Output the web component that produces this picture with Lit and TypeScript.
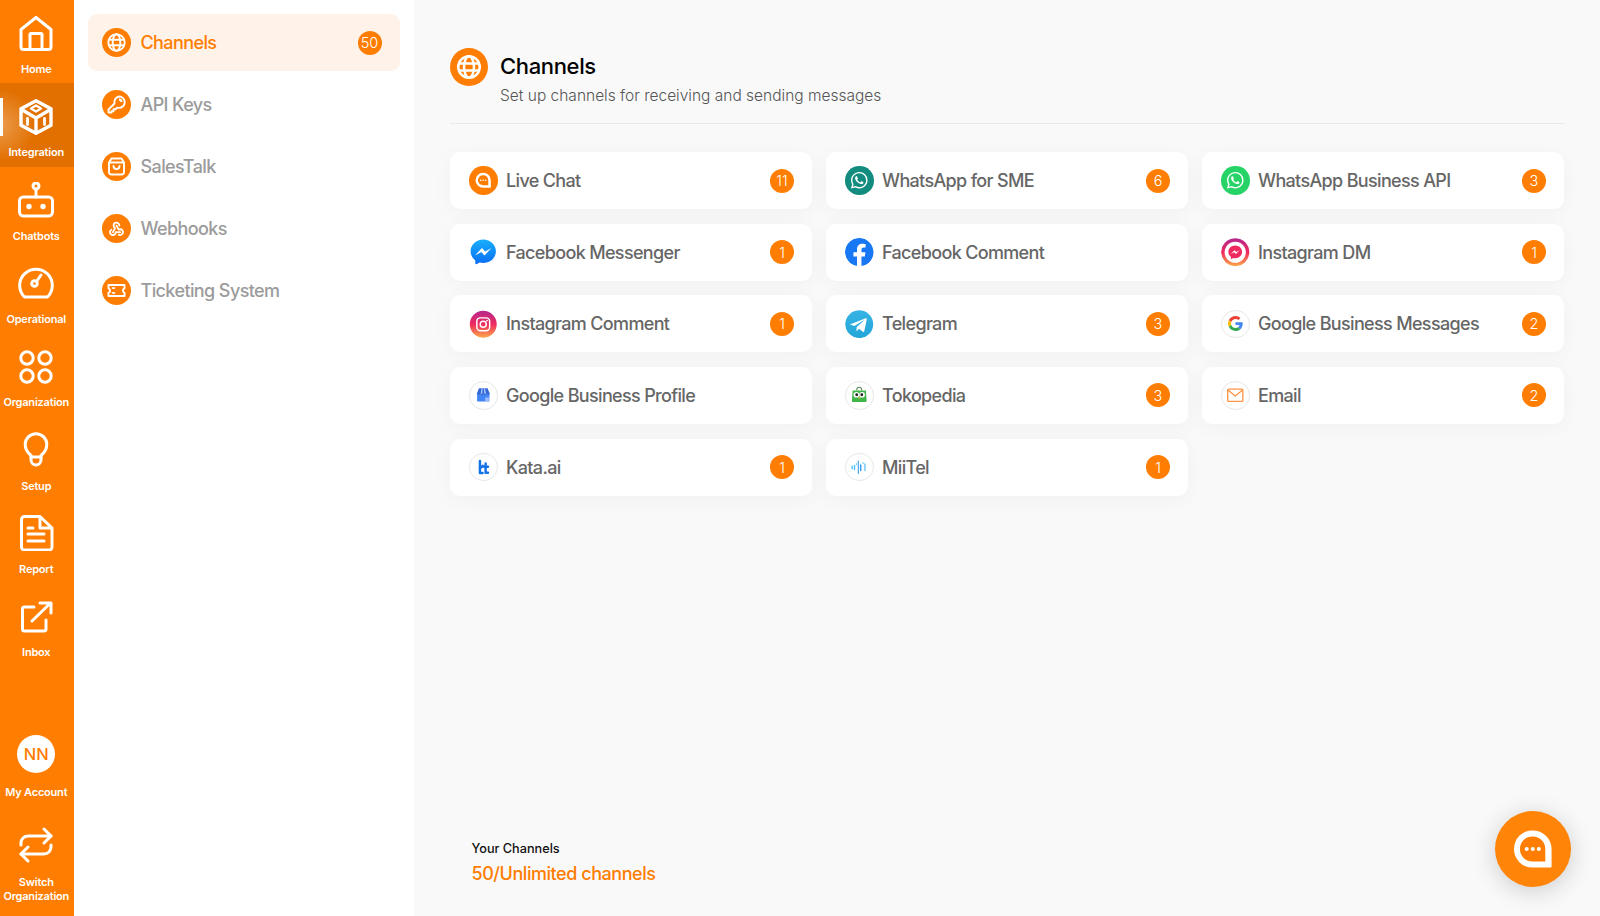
import { LitElement, html, css } from "lit";
import { customElement } from "lit/decorators.js";

const navIcons: Record<string, unknown> = {
  home: html`<svg class="nav-svg" viewBox="0 0 36 36" fill="none" stroke="#fff" stroke-width="3" stroke-linejoin="round"><path d="M3 13.500 18 1.500l15 12V31a2.500 2.500 0 0 1-2.500 2.500h-25A2.500 2.500 0 0 1 3 31Z"/><path d="M12 33V18.500a1 1 0 0 1 1-1h10a1 1 0 0 1 1 1V33"/></svg>`,
  cube: html`<svg class="nav-svg" viewBox="0 0 36 36" fill="none" stroke="#fff" stroke-width="3.400" stroke-linecap="round" stroke-linejoin="round"><path d="M18 1.700 33 9.800v16.400L18 34.300 3 26.200V9.800Z"/><path d="M3.500 10.500 12 15.500l6 3.500 6-3.500 8.500-5M18 19v14"/><path d="m18 6.500 5 3-5 3-5-3Z" stroke-width="2.400"/><path d="M9.500 19.500v6M26.500 19.500v6" stroke-width="2.800"/></svg>`,
  robot: html`<svg class="nav-svg" viewBox="0 0 36 36" fill="none" stroke="#fff" stroke-width="3" stroke-linecap="round" stroke-linejoin="round"><circle cx="18" cy="4" r="3"/><path d="M18 7v8"/><rect x="1.500" y="15" width="33" height="19" rx="4"/><circle cx="11" cy="24.500" r="1.200" fill="#fff"/><circle cx="25" cy="24.500" r="1.200" fill="#fff"/></svg>`,
  gauge: html`<svg class="nav-svg" viewBox="0 0 36 36" fill="none" stroke="#fff" stroke-width="3" stroke-linecap="round" stroke-linejoin="round"><path d="M6.500 32A16.300 16.300 0 1 1 29.500 32Z"/><circle cx="16.500" cy="18.500" r="2.800"/><path d="m18.500 16.500 4.500-6.500"/></svg>`,
  org: html`<svg class="nav-svg" viewBox="0 0 36 36" fill="none" stroke="#fff" stroke-width="3"><circle cx="9" cy="9" r="6.200"/><circle cx="27" cy="9" r="6.200"/><circle cx="9" cy="27" r="6.200"/><circle cx="27" cy="27" r="6.200"/></svg>`,
  bulb: html`<svg class="nav-svg" viewBox="0 0 36 36" fill="none" stroke="#fff" stroke-width="3" stroke-linecap="round" stroke-linejoin="round"><path d="M13 23.500c-3-2.500-5.800-6-5.800-11a10.800 10.800 0 0 1 21.600 0c0 5-2.800 8.500-5.800 11V28a5 5 0 0 1-10 0Z"/><path d="M13 25h10"/></svg>`,
  report: html`<svg class="nav-svg" viewBox="0 0 36 36" fill="none" stroke="#fff" stroke-width="3" stroke-linecap="round" stroke-linejoin="round"><path d="M6.500 1.500H22L34 13v19a3 3 0 0 1-3 3H6.500a3 3 0 0 1-3-3V4.500a3 3 0 0 1 3-3Z"/><path d="M22 2v11h11.500"/><path d="M10 13h5M10 19h16M10 26h16"/></svg>`,
  ext: html`<svg class="nav-svg" viewBox="0 0 36 36" fill="none" stroke="#fff" stroke-width="3" stroke-linecap="round" stroke-linejoin="round"><path d="M16 8H6.500a2 2 0 0 0-2 2v20a2 2 0 0 0 2 2H26a2 2 0 0 0 2-2V21"/><path d="M14 22 32 4.500M22 4h11v10"/></svg>`,
  swap: html`<svg class="nav-svg" viewBox="0 0 36 36" fill="none" stroke="#fff" stroke-width="3" stroke-linecap="round" stroke-linejoin="round"><path d="M3 18v-2a7 7 0 0 1 7-7h23"/><path d="m26 2 7 7-7 7"/><path d="M33 18v2a7 7 0 0 1-7 7H3"/><path d="m10 20-7 7 7 7"/></svg>`,
};

const topNav = [
  ["home", "Home"], ["cube", "Integration"], ["robot", "Chatbots"], ["gauge", "Operational"],
  ["org", "Organization"], ["bulb", "Setup"], ["report", "Report"], ["ext", "Inbox"],
];

const globe = html`<svg class="fill" viewBox="0 0 29 29" fill="none" stroke="#fff" stroke-width="1.900"><circle cx="14.500" cy="14.500" r="8.200"/><ellipse cx="14.500" cy="14.500" rx="3.800" ry="8.200"/><path d="M6.800 11.800h15.400M6.800 17.200h15.400"/></svg>`;
const key = html`<svg class="fill" viewBox="0 0 29 29" fill="none" stroke="#fff" stroke-width="1.900" stroke-linejoin="round"><path d="M17 6.500a5.700 5.700 0 0 1 0 11.400c-.7 0-1.300-.1-1.900-.3l-1.600 1.700h-2v2H9.500v1.200H6.500v-3l6-6a5.700 5.700 0 0 1 4.500-7Z"/><path d="M17 9.500a2.500 2.500 0 0 1 2.500 2.500"/></svg>`;
const bag = html`<svg class="fill" viewBox="0 0 29 29" fill="none" stroke="#fff" stroke-width="1.900" stroke-linecap="round" stroke-linejoin="round"><path d="M9.500 6.500h10l2.500 4v9.500a2.500 2.500 0 0 1-2.500 2.500h-10A2.500 2.500 0 0 1 7 20V10.500Z"/><path d="M7.500 10.500h14M11.500 14c0 4 6 4 6 0"/></svg>`;
const hook = html`<svg class="fill" viewBox="-8 -8 40 40" fill="none" stroke="#fff" stroke-width="2.500" stroke-linecap="round" stroke-linejoin="round"><path d="M4.876 13.610a4 4 0 1 0 6.124 3.390h6"/><path d="M15.066 20.502a4 4 0 1 0 1.934-7.502c-.706 0-1.424.179-2 .5l-3-5.500"/><path d="M16 8a4 4 0 1 0-8 0c0 1.506.77 2.818 2 3.500l-3 5.500"/></svg>`;
const ticket = html`<svg class="fill" viewBox="0 0 29 29" fill="none" stroke="#fff" stroke-width="1.900" stroke-linejoin="round"><path d="M6.500 9h16v3.300a2.300 2.300 0 0 0 0 4.400V20h-16v-3.300a2.300 2.300 0 0 0 0-4.400Z"/><path d="M11.500 11.500v1.500M11.500 16v1.500M9.800 12h3.400M9.800 17h3.400" stroke-width="1.300"/></svg>`;

const bubble = html`<svg class="fill" viewBox="0 0 29 29"><path d="M14.300 6.800a7.700 7.700 0 0 0 0 15.400h7.400a.5.500 0 0 0 .5-.5v-7.200a7.800 7.800 0 0 0-7.900-7.700Z" fill="#fff"/><path d="M14.300 9.300a5.200 5.200 0 0 0 0 10.400h5.300v-5.200a5.200 5.200 0 0 0-5.300-5.200Z" fill="#ff7d00"/><circle cx="11.900" cy="14.500" r=".85" fill="#fff"/><circle cx="14.400" cy="14.500" r=".85" fill="#fff"/><circle cx="16.900" cy="14.500" r=".85" fill="#fff"/></svg>`;

const waPath = "M17.472 14.382c-.297-.149-1.758-.867-2.030-.967-.273-.099-.471-.148-.67.15-.197.297-.767.966-.94 1.164-.173.199-.347.223-.644.075-.297-.15-1.255-.463-2.390-1.475-.883-.788-1.480-1.761-1.653-2.059-.173-.297-.018-.458.13-.606.134-.133.298-.347.446-.52.149-.174.198-.298.298-.497.099-.198.05-.371-.025-.52-.075-.149-.669-1.612-.916-2.207-.242-.579-.487-.5-.669-.51-.173-.008-.371-.01-.57-.01-.198 0-.52.074-.792.372-.272.297-1.040 1.016-1.040 2.479 0 1.462 1.065 2.875 1.213 3.074.149.198 2.096 3.200 5.077 4.487.709.306 1.262.489 1.694.625.712.227 1.360.195 1.871.118.571-.085 1.758-.719 2.006-1.413.248-.694.248-1.289.173-1.413-.074-.124-.272-.198-.57-.347m-5.421 7.403h-.004a9.870 9.870 0 01-5.031-1.378l-.361-.214-3.741.982.998-3.648-.235-.374a9.860 9.860 0 01-1.510-5.260c.001-5.450 4.436-9.884 9.888-9.884 2.640 0 5.122 1.030 6.988 2.898a9.825 9.825 0 012.893 6.994c-.003 5.450-4.437 9.884-9.885 9.884m8.413-18.297A11.815 11.815 0 0012.050 0C5.495 0 .160 5.335.157 11.892c0 2.096.547 4.142 1.588 5.945L.057 24l6.305-1.654a11.882 11.882 0 005.683 1.448h.005c6.554 0 11.890-5.335 11.893-11.893a11.821 11.821 0 00-3.480-8.413z";
const wa = html`<svg class="fill" viewBox="-8.500 -8.500 41 41"><path fill="#fff" d=${waPath}/></svg>`;

const msgPath = "M12 0C5.373 0 0 4.974 0 11.111c0 3.498 1.744 6.614 4.469 8.654V24l4.088-2.242c1.092.3 2.246.464 3.443.464 6.627 0 12-4.975 12-11.111C24 4.974 18.627 0 12 0zm1.191 14.963l-3.055-3.260-5.963 3.260L10.732 8l3.131 3.259L19.752 8l-6.561 6.963z";

const iconFor: Record<string, unknown> = {
  live: html`<span class="ic orange">${bubble}</span>`,
  wasme: html`<span class="ic wasme">${wa}</span>`,
  waapi: html`<span class="ic waapi">${wa}</span>`,
  msg: html`<span class="ic"><svg class="fill" viewBox="-1.500 -1.500 27 27"><defs><linearGradient id="m1" x1="0" y1="0" x2="0" y2="1"><stop offset="0" stop-color="#18aefc"/><stop offset="1" stop-color="#0a6cf5"/></linearGradient></defs><path fill="url(#m1)" d=${msgPath}/></svg></span>`,
  fb: html`<span class="ic"><svg class="fill" viewBox="0 0 24 24"><circle cx="12" cy="12" r="11.500" fill="#fff"/><path fill="#1877f2" d="M24 12.073c0-6.627-5.373-12-12-12s-12 5.373-12 12c0 5.990 4.388 10.954 10.125 11.854v-8.385H7.078v-3.470h3.047V9.430c0-3.007 1.792-4.669 4.533-4.669 1.312 0 2.686.235 2.686.235v2.953H15.830c-1.491 0-1.956.925-1.956 1.874v2.250h3.328l-.532 3.470h-2.796v8.385C19.612 23.027 24 18.062 24 12.073z"/></svg></span>`,
  igdm: html`<span class="ic"><svg class="fill" viewBox="0 0 29 29"><defs><linearGradient id="g1" x1="0" y1="0" x2="0" y2="1"><stop offset="0" stop-color="#b5288f"/><stop offset=".5" stop-color="#ee2a5e"/><stop offset="1" stop-color="#fdaa4a"/></linearGradient></defs><circle cx="14.500" cy="14.500" r="14.300" fill="url(#g1)"/><circle cx="14.500" cy="14.500" r="10.800" fill="#fff"/><g transform="translate(7.500 7.700) scale(.58)"><path fill="#ee2a5e" d=${msgPath}/></g></svg></span>`,
  igc: html`<span class="ic"><svg class="fill" viewBox="0 0 29 29" fill="none"><defs><linearGradient id="g2" x1="0" y1="0" x2="0" y2="1"><stop offset="0" stop-color="#b5288f"/><stop offset=".5" stop-color="#ee2a5e"/><stop offset="1" stop-color="#fdaa4a"/></linearGradient></defs><circle cx="14.500" cy="14.500" r="13.700" fill="url(#g2)"/><rect x="8" y="8" width="13" height="13" rx="3.500" stroke="#fff" stroke-width="1.500"/><circle cx="14.500" cy="14.500" r="3.100" stroke="#fff" stroke-width="1.500"/><circle cx="18.300" cy="10.700" r=".9" fill="#fff"/></svg></span>`,
  tg: html`<span class="ic"><svg class="fill" viewBox="0 0 29 29"><defs><linearGradient id="t1" x1="0" y1="0" x2="0" y2="1"><stop offset="0" stop-color="#37b3e6"/><stop offset="1" stop-color="#22a6d8"/></linearGradient></defs><circle cx="14.500" cy="14.500" r="14.200" fill="url(#t1)"/><path fill="#fff" d="M6.200 14.200 21 8.400c.7-.3 1.300.2 1.100 1.200l-2.500 11.900c-.2.800-.7 1-1.400.6l-3.900-2.900-1.900 1.800c-.2.200-.4.400-.8.400l.3-4 7.200-6.500c.3-.3-.1-.4-.5-.2l-8.900 5.600-3.800-1.200c-.8-.2-.8-.8.2-1.300Z"/></svg></span>`,
  gbm: html`<span class="ic bordered"><svg class="g" viewBox="0 0 48 48"><path fill="#EA4335" d="M24 9.500c3.540 0 6.710 1.220 9.210 3.600l6.850-6.850C35.900 2.380 30.470 0 24 0 14.620 0 6.510 5.380 2.560 13.220l7.980 6.190C12.430 13.720 17.740 9.500 24 9.500z"/><path fill="#4285F4" d="M46.980 24.550c0-1.570-.15-3.090-.38-4.550H24v9.020h12.940c-.58 2.960-2.260 5.480-4.780 7.180l7.730 6c4.510-4.180 7.090-10.360 7.090-17.650z"/><path fill="#FBBC05" d="M10.530 28.590c-.48-1.450-.76-2.990-.76-4.590s.27-3.140.76-4.590l-7.980-6.190C.92 16.460 0 20.120 0 24c0 3.880.92 7.540 2.560 10.780l7.970-6.190z"/><path fill="#34A853" d="M24 48c6.480 0 11.930-2.130 15.890-5.810l-7.730-6c-2.150 1.450-4.920 2.300-8.160 2.300-6.260 0-11.570-4.220-13.470-9.910l-7.980 6.190C6.510 42.620 14.620 48 24 48z"/></svg></span>`,
  gbp: html`<span class="ic bordered"><svg class="fill" viewBox="0 0 28 28"><path fill="#4285f4" d="M7.500 13h13v7.500h-13z"/><path fill="#9dbdf8" d="M16 16.500h4v3.500h-4z"/><path fill="#3367d6" d="M9.500 6.500h9l2.500 6a2 2 0 0 1-3.700 0 1.600 1.600 0 0 1-3.200 0 1.600 1.600 0 0 1-3.200 0 2 2 0 0 1-3.700 0Z"/><path fill="#aac6fb" d="M12.200 6.500h1.200l-.4 6h-1.700ZM14.600 6.500h1.200l1.200 6h-1.800Z"/></svg></span>`,
  toko: html`<span class="ic bordered"><svg class="fill" viewBox="0 0 28 28"><path fill="none" stroke="#5f8a63" stroke-width="1.100" d="M11.300 9c0-4.500 5.400-4.500 5.400 0"/><path fill="#42b549" d="M7 9h14l.8 11a1 1 0 0 1-1 1H7.200a1 1 0 0 1-1-1Z"/><circle cx="11" cy="13.500" r="3" fill="#fff"/><circle cx="17" cy="13.500" r="3" fill="#fff"/><circle cx="11.300" cy="13.500" r="1.500" fill="#222"/><circle cx="16.700" cy="13.500" r="1.500" fill="#222"/><path fill="#f7b731" d="m12.700 16 2.600 0-1.300 2.200Z"/></svg></span>`,
  email: html`<span class="ic bordered"><svg class="fill" viewBox="0 0 28 28" fill="none" stroke="#ff9447" stroke-width="1.400" stroke-linejoin="round"><rect x="6" y="7.500" width="16" height="13" rx="1"/><path d="m6.300 8.500 7.700 6.300 7.700-6.300"/></svg></span>`,
  kata: html`<span class="ic bordered"><svg class="fill" viewBox="0 0 28 28" fill="none" stroke="#1173e6" stroke-width="2.600" stroke-linecap="round" stroke-linejoin="round"><path d="M10.500 7.500v12.500h2.800"/><path d="M10.500 14.500c1.500-.5 2.500-1 3-2"/><path d="M16.500 10v9.800h2.500M15 13.500h4"/></svg></span>`,
  mii: html`<span class="ic bordered"><svg class="fill" viewBox="0 0 28 28" fill="none" stroke-linecap="round"><path d="M6.500 13v2.500M9 12v4.500" stroke="#4fc3f7" stroke-width="1.500"/><path d="M13 7.500v13" stroke="#2c9cf0" stroke-width="1.100"/><path d="M15.500 11.500v6" stroke="#2c9cf0" stroke-width="1.500"/><path d="M20 10.500v7" stroke="#68c9f2" stroke-width="1.500"/><path d="M11 10.500v.4M18 9.500v.4" stroke="#4fc3f7" stroke-width="1.400"/></svg></span>`,
};

const channels: [string, string, number?][] = [
  ["live", "Live Chat", 11], ["wasme", "WhatsApp for SME", 6], ["waapi", "WhatsApp Business API", 3],
  ["msg", "Facebook Messenger", 1], ["fb", "Facebook Comment"], ["igdm", "Instagram DM", 1],
  ["igc", "Instagram Comment", 1], ["tg", "Telegram", 3], ["gbm", "Google Business Messages", 2],
  ["gbp", "Google Business Profile"], ["toko", "Tokopedia", 3], ["email", "Email", 2],
  ["kata", "Kata.ai", 1], ["mii", "MiiTel", 1],
];

const menu: [unknown, string, number?][] = [
  [globe, "Channels", 50], [key, "API Keys"], [bag, "SalesTalk"], [hook, "Webhooks"], [ticket, "Ticketing System"],
];

@customElement("app-root")
export class AppRoot extends LitElement {
  static styles = css`
    :host { display: block; width: 1600px; height: 916px; overflow: hidden; font-family: Inter, "Liberation Sans", sans-serif; position: relative; }
    * { box-sizing: border-box; }
    .app { display: grid; grid-template-columns: 73.500px 340px 1fr; height: 916px; background: #f9f9f9; }

    .rail { background: #ff7d00; display: flex; flex-direction: column; justify-content: space-between; color: #fff; }
    .nav { height: 83.330px; padding: 15.500px 1px 0 0; display: flex; flex-direction: column; align-items: center; position: relative; }
    .nav.active { background: radial-gradient(circle at 0 50%, rgba(255,255,255,.3), rgba(255,255,255,0) 42%), #e27000; }
    .nav.active::before { content: ""; position: absolute; left: 0; top: 14.500px; width: 2.500px; height: 38px; background: #fff; }
    .nav-svg { width: 36px; height: 36px; display: block; flex: none; }
    .nav span { margin-top: 10.500px; font-size: 11px; line-height: 14px; font-weight: 600; white-space: nowrap; text-align: center; letter-spacing: -.2px; }
    .nav.acct { height: 88px; padding-top: 7px; }
    .avatar { width: 38px; height: 38px; flex: none; border-radius: 50%; background: #fff; color: #ff7d00; font-size: 16.500px; font-weight: 500; display: flex; align-items: center; justify-content: center; }
    .nav.acct span { margin-top: 12px; }
    .nav.swap { height: 100px; padding-top: 11px; }
    .nav.swap span { margin-top: 12px; }

    .panel { background: #fff; padding: 14px 14px 14px 14.500px; display: flex; flex-direction: column; gap: 5px; }
    .item { height: 57px; border-radius: 9px; display: flex; align-items: center; padding: 0 18px 0 13.500px; color: #9b9b9b; font-size: 18px; line-height: 23px; font-weight: 500; letter-spacing: -.6px; }
    .item.active { background: #fff2e9; color: #ff7d00; }
    .circle { width: 29px; height: 29px; flex: none; border-radius: 50%; background: #ff7d00; margin-right: 10px; display: block; }
    .fill { width: 100%; height: 100%; display: block; }
    .item .count { margin-left: auto; }

    .count { width: 24px; height: 24px; flex: none; border-radius: 50%; background: #ff7d00; color: #fff; font-size: 14.500px; font-weight: 300; letter-spacing: 0; display: flex; align-items: center; justify-content: center; }

    .main { padding: 48px 36px 0 36.500px; display: flex; flex-direction: column; }
    .head { display: grid; grid-template-columns: 38px 1fr; grid-template-rows: auto 1fr; column-gap: 12px; height: 76px; border-bottom: 1.500px solid #e9e9e9; }
    .big { width: 38px; height: 38px; border-radius: 50%; background: #ff7d00; grid-row: 1 / span 2; }
    .head h1 { margin: 5px 0 0; font-size: 22px; line-height: 27px; font-weight: 500; color: #000; letter-spacing: -.35px; }
    .head p { margin: 6px 0 0; font-size: 15.500px; line-height: 20px; font-weight: 300; color: #555; letter-spacing: 0; }

    .grid { margin-top: 28px; display: grid; grid-template-columns: repeat(3, 1fr); column-gap: 14px; row-gap: 14.670px; }
    .card { height: 57px; border-radius: 10px; background: #fff; box-shadow: 0 4px 22px rgba(0,0,0,.035); display: flex; align-items: center; padding: 0 18px 0 19px; color: #666; font-size: 18px; font-weight: 500; letter-spacing: -.66px; }
    .ic { width: 28.500px; height: 28.500px; flex: none; border-radius: 50%; margin-right: 8.500px; display: flex; align-items: center; justify-content: center; overflow: hidden; }
    .ic.orange { background: #ff7d00; }
    .ic.wasme { background: #128c7e; }
    .ic.waapi { background: #25d366; }
    .ic.bordered { border: 1px solid #e8e8e8; background: #fff; }
    .ic .g { width: 15px; height: 15px; display: block; }
    .card .count { margin-left: auto; }

    .foot { margin-top: auto; padding: 0 0 31.500px 21.500px; }
    .foot .l1 { font-size: 12.700px; line-height: 18px; font-weight: 500; color: #111; }
    .foot .l2 { margin-top: 4px; font-size: 18px; line-height: 23px; font-weight: 500; color: #ff7d00; letter-spacing: -.45px; }

    .fab { position: absolute; left: 1495px; top: 811px; width: 76px; height: 76px; padding: 3px; border-radius: 50%; background: #ff8407; box-shadow: 0 4px 24px rgba(0,0,0,.18); }
  `;

  render() {
    return html`
      <div class="app">
        <nav class="rail">
          <div>
            ${topNav.map(([ic, label]) => html`<div class="nav ${label === "Integration" ? "active" : ""}">${navIcons[ic]}<span>${label}</span></div>`)}
          </div>
          <div>
            <div class="nav acct"><div class="avatar">NN</div><span>My Account</span></div>
            <div class="nav swap">${navIcons.swap}<span>Switch<br />Organization</span></div>
          </div>
        </nav>
        <aside class="panel">
          ${menu.map(([ic, label, n], i) => html`<div class="item ${i === 0 ? "active" : ""}"><span class="circle">${ic}</span>${label}${n ? html`<span class="count">${n}</span>` : ""}</div>`)}
        </aside>
        <main class="main">
          <header class="head">
            <div class="big">${globe}</div>
            <h1>Channels</h1>
            <p>Set up channels for receiving and sending messages</p>
          </header>
          <section class="grid">
            ${channels.map(([ic, label, n]) => html`<div class="card">${iconFor[ic]}${label}${n ? html`<span class="count">${n}</span>` : ""}</div>`)}
          </section>
          <footer class="foot">
            <div class="l1">Your Channels</div>
            <div class="l2">50/Unlimited channels</div>
          </footer>
        </main>
      </div>
      <div class="fab">${bubble}</div>
    `;
  }
}
